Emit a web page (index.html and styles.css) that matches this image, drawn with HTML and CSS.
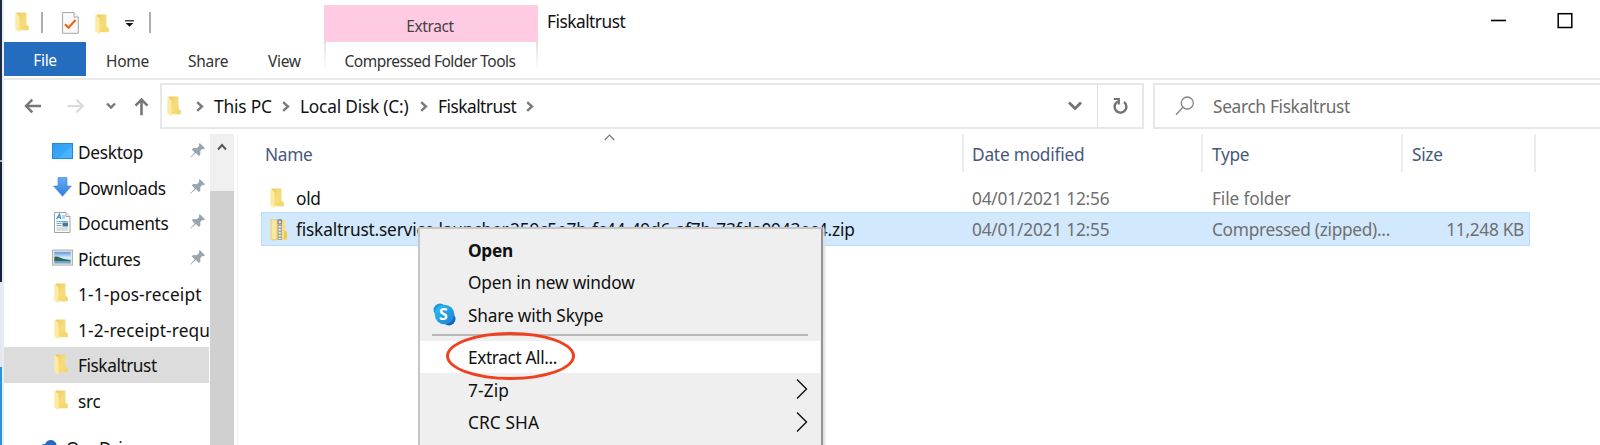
FILE: index.html
```html
<!DOCTYPE html>
<html lang="en">
<head>
<meta charset="utf-8">
<title>Fiskaltrust</title>
<link rel="stylesheet" href="styles.css">
</head>
<body>
<svg class="defs" width="0" height="0" aria-hidden="true">
  <defs>
    <linearGradient id="gold" x1="0" y1="0" x2="1" y2="1"><stop offset="0" stop-color="#e9cb62"/><stop offset=".5" stop-color="#f6dc7c"/><stop offset="1" stop-color="#f3d467"/></linearGradient>
    <linearGradient id="sky" x1="0" y1="0" x2="1" y2="1"><stop offset="0" stop-color="#2f9bf0"/><stop offset="1" stop-color="#41b1fd"/></linearGradient>
    <linearGradient id="arrow" x1="0" y1="0" x2="0" y2="1"><stop offset="0" stop-color="#66a9ef"/><stop offset="1" stop-color="#2f7fdf"/></linearGradient>
    <linearGradient id="skype" x1="0" y1="0" x2="1" y2="1"><stop offset="0" stop-color="#2fc0f3"/><stop offset="1" stop-color="#1a7fd4"/></linearGradient>
    <linearGradient id="photo" x1="0" y1="0" x2="0" y2="1"><stop offset="0" stop-color="#5b97dc"/><stop offset=".5" stop-color="#d4ebf8"/><stop offset="1" stop-color="#8fc3e4"/></linearGradient>
    <symbol id="folder" viewBox="0 0 14 21">
      <path d="M1.500 .5h10v12.300l2.300 1.500v4H3z" fill="url(#gold)"/>
      <path d="M.3.800 4.600 4.300V20.500L.3 17.500z" fill="#fdeaa3"/>
    </symbol>
    <symbol id="pin" viewBox="0 0 15 15">
      <path d="M9.700 0 15 5.200l-1.500 1-1.300-.2-2 2.200.2 3.600-1.500 1.300-3-3L.8 14.600 0 14.400l4.700-5L1.800 6.300 3.300 5l3.300.2 2.500-2.300V1z" fill="#9aa5af"/>
    </symbol>
    <symbol id="crumb" viewBox="0 0 8 11"><path d="M1.200 1.200 5.900 5.500 1.200 9.800" fill="none" stroke="#7b7b7b" stroke-width="2.500"/></symbol>
  </defs>
</svg>
<div class="screen">
  <div class="desktop-edge"><i class="edge-dark"></i><i class="edge-line"></i><i class="edge-dark2"></i><i class="edge-light"></i><i class="edge-blue"></i></div>
  <div class="window">
    <header class="ribbon">
      <div class="quick">
        <svg class="q-folder" width="14" height="21"><use href="#folder"/></svg>
        <i class="q-bar"></i>
        <svg class="q-doc" width="17" height="22" viewBox="0 0 17 22"><path d="M.6.600h11.400l4.300 4.500v16.200H.6z" fill="#fafafa" stroke="#a4a4a4"/><path d="M12 .6v4.500h4.300" fill="#fff" stroke="#a4a4a4"/><path d="M3 12.300l3.500 3.500L13.500 8" fill="none" stroke="#f26011" stroke-width="2.100"/></svg>
        <svg class="q-folder2" width="14" height="21"><use href="#folder"/></svg>
        <svg class="q-more" width="9" height="7" viewBox="0 0 9 7"><path d="M0 .8h9" stroke="#222" stroke-width="1.300"/><path d="M.6 3h7.800L4.500 6.800z" fill="#111"/></svg>
        <i class="q-bar"></i>
      </div>
      <nav class="tabs">
        <span class="tab tab-file">File</span>
        <span class="tab tab-home">Home</span>
        <span class="tab tab-share">Share</span>
        <span class="tab tab-view">View</span>
      </nav>
      <div class="context-head">Extract</div>
      <div class="context-tab">Compressed Folder Tools</div>
      <div class="title">Fiskaltrust</div>
      <div class="controls">
        <svg width="84" height="18" viewBox="0 0 84 18"><path d="M1 8.500h15" stroke="#000" stroke-width="1.600"/><rect x="68.200" y="1.700" width="13.600" height="13.800" fill="none" stroke="#000" stroke-width="1.500"/></svg>
      </div>
    </header>

    <div class="navbar">
      <div class="arrows">
        <svg width="132" height="20" viewBox="0 0 132 20" fill="none">
          <g stroke="#777" stroke-width="2.400"><path d="M17 10H2M8.300 3.700 2 10l6.300 6.300"/><path d="M83 7.500l4 4 4-4"/><path d="M117.500 19.300V3.500M111.500 9.700l6-6.200 6 6.200" stroke-width="2.600"/></g>
          <path d="M43.500 10h15M52.500 3.700 58.800 10l-6.300 6.300" stroke="#dadada" stroke-width="2.200"/>
        </svg>
      </div>
      <div class="address">
        <svg class="a-folder" width="14" height="21"><use href="#folder"/></svg>
        <svg width="8" height="11"><use href="#crumb"/></svg>
        <span class="crumb crumb-pc">This PC</span>
        <svg width="8" height="11"><use href="#crumb"/></svg>
        <span class="crumb crumb-disk">Local Disk (C:)</span>
        <svg width="8" height="11"><use href="#crumb"/></svg>
        <span class="crumb crumb-dir">Fiskaltrust</span>
        <svg width="8" height="11"><use href="#crumb"/></svg>
        <svg class="a-drop" width="14" height="10" viewBox="0 0 14 10"><path d="M1 1.500 7 7.500 13 1.500" fill="none" stroke="#737373" stroke-width="2.700"/></svg>
        <div class="refresh"><svg width="17" height="18" viewBox="0 0 17 18" fill="none" stroke="#737373"><path d="M5.800 4.500A5.900 5.900 0 1 0 12 5" stroke-width="2.500"/><path d="M1.800 2h5v5.500" stroke-width="2.200"/></svg></div>
      </div>
      <div class="search">
        <svg width="20" height="20" viewBox="0 0 20 20" fill="none" stroke="#858585" stroke-width="1.300"><circle cx="12.300" cy="7" r="6"/><path d="M8 11.300 1 18.700"/></svg>
        <span>Search Fiskaltrust</span>
      </div>
    </div>

    <div class="body">
      <aside class="tree">
        <div class="node"><svg class="ico" width="22" height="20" viewBox="0 0 22 20"><rect x=".5" y="1.500" width="20" height="15" fill="url(#sky)" stroke="#2587d8"/><path d="M7 16 20 4v12z" fill="#53bcff" opacity=".55"/></svg><span>Desktop</span><svg class="pin" width="15" height="15"><use href="#pin"/></svg></div>
        <div class="node"><svg class="ico" width="22" height="20" viewBox="0 0 22 20"><path d="M6 .5h9v8.500h4.300L10.600 19.300 1.500 9H6z" fill="url(#arrow)" stroke="#3e86dc" stroke-width=".6"/></svg><span>Downloads</span><svg class="pin" width="15" height="15"><use href="#pin"/></svg></div>
        <div class="node"><svg class="ico" width="22" height="21" viewBox="0 0 22 21"><path d="M2.500.500H14l4 4v16H2.500z" fill="#fcfcfc" stroke="#a3a3a3"/><path d="M14 .5v4h4" fill="#eee" stroke="#a3a3a3"/><path d="M4.500 7 7.600 2l1 5M5.500 5.300h2.700" stroke="#3090d8" stroke-width="1.200" fill="none"/><path d="M10 4h3M10 6h3M4.500 9.500H16M4.500 11.500h5M4.500 13.500h5" stroke="#6aaede"/><path d="M4.500 16H16M4.500 18H16" stroke="#bdbdbd"/><rect x="10.500" y="10.500" width="5.500" height="4" fill="#47799a"/></svg><span>Documents</span><svg class="pin" width="15" height="15"><use href="#pin"/></svg></div>
        <div class="node"><svg class="ico" width="22" height="18" viewBox="0 0 22 18"><rect x=".6" y="1.100" width="19.800" height="15" fill="#ebebeb" stroke="#aaa"/><rect x="2.300" y="2.800" width="16.400" height="11.600" fill="url(#photo)"/><path d="M2.300 8c3-1.500 6 1.200 9.500 2l6.900 1.200V12L2.300 12z" fill="#35684f"/><path d="M2.300 12h16.400v2.400H2.300z" fill="#6fa5cf"/></svg><span>Pictures</span><svg class="pin" width="15" height="15"><use href="#pin"/></svg></div>
        <div class="node"><svg class="ico dir" width="14" height="21"><use href="#folder"/></svg><span class="wide">1-1-pos-receipt</span></div>
        <div class="node"><svg class="ico dir" width="14" height="21"><use href="#folder"/></svg><span class="wide">1-2-receipt-requ</span></div>
        <div class="node current"><svg class="ico dir" width="14" height="21"><use href="#folder"/></svg><span class="tight">Fiskaltrust</span></div>
        <div class="node"><svg class="ico dir" width="14" height="21"><use href="#folder"/></svg><span>src</span></div>
        <div class="node drive"><svg width="20" height="14" viewBox="0 0 20 14"><path d="M1 14C-1 8 3 4.500 6 5.200 8-.5 16-.5 17.500 5.500 20 8 19 14 19 14z" fill="#2369c3"/><path d="M1 14c-1-5 2-8.500 5.500-8.500C10 6 13 9 19 14z" fill="#2f80d8"/></svg><span>OneDrive</span></div>
      </aside>
      <div class="scroll"><div class="scroll-up"><svg width="10" height="8" viewBox="0 0 10 8"><path d="M1 6.500 5 2l4 4.500" fill="none" stroke="#555" stroke-width="1.900"/></svg></div><div class="scroll-thumb"></div></div>
      <main class="list">
        <svg class="sort" width="11" height="7" viewBox="0 0 11 7"><path d="M.8 6 5.500 1.200 10.200 6" fill="none" stroke="#777" stroke-width="1.200"/></svg>
        <div class="cols head"><span class="h-name">Name</span><span class="h-date">Date modified</span><span>Type</span><span>Size</span></div>
        <div class="cols row"><span class="name"><svg width="14" height="21"><use href="#folder"/></svg><b>old</b></span><span class="date">04/01/2021 12:56</span><span class="kind">File folder</span><span></span></div>
        <div class="cols row selected"><span class="name"><svg width="18" height="22" viewBox="0 0 18 22"><path d="M1 .8h14v20H1z" fill="#f8df82"/><path d="M1 .8h6v20H1z" fill="#fbe89f" stroke="#e6c860" stroke-width=".8"/><path d="M14 11l3 2v7.500h-3z" fill="#efca4c"/><path d="M7.500 0h4.500v21H7.500z" fill="#a9a9a0"/><path d="M9.800 1v19" stroke="#eee" stroke-dasharray="1.500 1.500" stroke-width="2"/><circle cx="9.800" cy="3" r="2" fill="#ddd" stroke="#777"/></svg><b class="zip">fiskaltrust.service.launcher.259c5e7b-fc44-49d6-af7b-73fda0943ec4.zip</b></span><span class="date">04/01/2021 12:55</span><span>Compressed (zipped)...</span><span class="size">11,248 KB</span></div>
      </main>
    </div>
  </div>

  <div class="menu">
    <div class="item strong">Open</div>
    <div class="item spaced">Open in new window</div>
    <div class="item spaced"><svg class="skype" width="23" height="23" viewBox="0 0 23 23"><circle cx="7" cy="7" r="6.500" fill="#1c9be0"/><circle cx="16" cy="16" r="6.500" fill="#1763c0"/><circle cx="11.500" cy="11.500" r="9.800" fill="url(#skype)"/></svg><em>S</em>Share with Skype</div>
    <div class="rule"></div>
    <div class="item low hot">Extract All...</div>
    <div class="item low open">7-Zip<svg class="sub" width="12" height="22" viewBox="0 0 12 22"><path d="M1 1.500 10.500 11 1 20.500" fill="none" stroke="#111" stroke-width="1.400"/></svg></div>
    <div class="item low open">CRC SHA<svg class="sub" width="12" height="22" viewBox="0 0 12 22"><path d="M1 1.500 10.500 11 1 20.500" fill="none" stroke="#111" stroke-width="1.400"/></svg></div>
  </div>
  <div class="marker"></div>
</div>
</body>
</html>
```
FILE: styles.css
```css
* { box-sizing: border-box; }
body { margin: 0; background: #fff; font-family: "Noto Sans", "Open Sans", sans-serif; font-size: 17.3px; letter-spacing: -0.3px; color: #111; }
span, b, .item, .title, .context-tab { white-space: nowrap; }
svg { display: block; flex: none; }
.defs { position: absolute; }
.screen { position: relative; display: flex; width: 1600px; height: 445px; overflow: hidden; }

.desktop-edge { display: flex; flex: none; flex-direction: column; width: 4px; border-right: 2px solid #e9ecf0; }
.edge-dark { height: 160px; background: #1c2b45; }
.edge-line { height: 2px; background: #a9b2c2; }
.edge-dark2 { height: 120px; background: #14233b; }
.edge-light { height: 85px; background: #e4e8ee; }
.edge-blue { flex: 1; background: #2b95e0; }
.window { flex: 1; display: flex; flex-direction: column; min-width: 0; }

.ribbon { display: grid; grid-template: 42px 34px / 320px 214px 1fr 120px; height: 80px; border-bottom: 2px solid #e9e9e9; }
.quick { display: flex; align-items: center; padding: 2px 0 0 11px; }
.q-bar { width: 2px; height: 21px; background: #adadad; }
.q-folder { margin-right: 12px; }
.q-doc { margin: 2px 16px 0 19px; }
.q-folder2 { margin-top: 4px; margin-right: 16px; }
.q-more { margin-right: 15px; margin-top: 2px; }
.tabs { grid-row: 2; grid-column: 1; display: flex; font-size: 15.5px; color: #333; }
.tab { line-height: 38px; }
.tab-file { width: 82px; line-height: 36px; text-align: center; color: #fff; background: #246cbe; }
.tab-home { margin-left: 20px; width: 82px; }
.tab-share { width: 80px; }
.context-head { grid-row: 1; grid-column: 2; margin-top: 5px; padding-right: 2px; line-height: 43px; text-align: center; font-size: 15.5px; letter-spacing: -0.4px; color: #444; background: #fecbe3; }
.context-tab { grid-row: 2; grid-column: 2; height: 28px; line-height: 38px; text-align: center; font-size: 15.5px; letter-spacing: -0.53px; padding-right: 2px; color: #333; border: solid; border-width: 0 2px; border-image: linear-gradient(#e0e0e0, #fff) 1; }
.title { grid-row: 1; grid-column: 3; padding-left: 9px; line-height: 43px; letter-spacing: -0.5px; }
.controls { grid-row: 1; grid-column: 4; padding: 12px 0 0 10px; }

.navbar { display: flex; height: 49px; padding-top: 3px; }
.arrows { flex: none; width: 156px; padding: 13px 0 0 20px; }
.address { display: flex; flex: none; align-items: center; width: 984px; height: 46px; padding-left: 5px; border: 2px solid #e7e7e7; }
.a-folder { margin-right: 15px; }
.crumb-pc { width: 68px; margin-left: 10px; letter-spacing: -0.15px; }
.crumb-disk { width: 120px; margin-left: 10px; letter-spacing: -0.2px; }
.crumb-dir { width: 88px; margin-left: 10px; letter-spacing: -0.5px; }
.a-drop { margin-left: auto; margin-right: 15px; }
.refresh { display: flex; align-items: center; justify-content: center; width: 45px; align-self: stretch; border-left: 1px solid #e0e0e0; }
.search { display: flex; align-items: center; flex: none; width: 470px; height: 46px; margin-left: 9px; padding-left: 20px; border: 2px solid #e7e7e7; color: #6b6b6b; }
.search span { margin-left: 18px; letter-spacing: -0.33px; }

.body { display: flex; flex: 1; min-height: 0; }
.tree { width: 206px; padding-top: 5px; overflow: hidden; }
.node { display: flex; align-items: center; height: 35.5px; padding-left: 48px; }
.node span { margin-left: -1px; padding-top: 2px; }
.node .wide { letter-spacing: 0.12px; }
.node .tight { letter-spacing: -0.45px; }
.ico { margin-right: 5px; }
.ico.dir { margin-left: 2px; margin-right: 11px; }
.pin { margin: 0 5px 2px auto; }
.current { width: 205px; background: #dcdcdc; }
.drive { height: 54px; padding-left: 35px; }
.node.drive span { margin-left: 7px; margin-top: 4px; }
.drive svg { margin-top: 1px; }
.scroll { width: 24px; margin-top: 5px; background: #f0f0f0; }
.scroll-up { display: flex; justify-content: center; height: 57px; padding-top: 9px; }
.scroll-thumb { height: 260px; background: #d0d0d0; }
.list { position: relative; flex: 1; margin: 5px 0 0 3px; border-left: 1px solid #f1f1f1; }
.sort { position: absolute; left: 366px; top: 0; }
.cols { display: grid; grid-template-columns: 702px 239px 200px 133px; align-items: center; width: 1274px; }
.head { margin-left: 24px; height: 38px; color: #47597b; }
.head span { padding: 0 0 0 9px; height: 38px; line-height: 42px; border-right: 2px solid #ececec; }
.head .h-name { padding-left: 3px; }
.head .h-date { padding-left: 8px; letter-spacing: -0.22px; }
.row { margin-left: 23px; height: 33px; color: #6f6f6f; grid-template-columns: 703px 239px 200px 127px; width: 1269px; }
.row span { padding-left: 9px; }
.row .date { padding-left: 8px; letter-spacing: -0.2px; }
.row .kind { letter-spacing: -0.15px; }
.row:nth-of-type(2) { margin-top: 10px; }
.row b { font-weight: normal; color: #111; }
.row .zip { letter-spacing: -0.19px; }
.row .name { display: flex; align-items: center; padding-left: 9px; }
.name svg { width: 18px; margin-right: 8px; }
.name svg:has(use) { width: 14px; margin-right: 12px; }
.row.selected { height: 34px; padding-top: 1px; background: #d2e8fd; box-shadow: inset 0 0 0 1px #b8dcfb; margin-top: -3px; }
.row .size { text-align: right; padding: 0 6px 0 0; }

.menu { position: absolute; left: 418px; top: 227px; width: 405px; height: 240px; padding-top: 5px; background: #efefef; border: 2px solid #c6c6c6; border-right-color: #969696; box-shadow: 2px 1px 2px #ddd; }
.item { position: relative; display: flex; align-items: center; height: 32.5px; padding-left: 48px; }
.strong { font-weight: 700; }
.spaced { letter-spacing: -0.18px; }
.low { padding-top: 2px; letter-spacing: -0.38px; }
.open { letter-spacing: 0.1px; }
.rule { height: 2px; margin: 2px 13px 5px 12px; background: #b9b9b9; }
.hot { background: #fff; margin-right: 1px; }
.sub { margin-left: auto; margin-right: 13px; margin-bottom: 2px; }
.skype { position: absolute; left: 13px; top: 4px; }
.item em { position: absolute; left: 19px; top: 3px; color: #fff; font: 700 16px/24px "Noto Sans", sans-serif; }
.marker { position: absolute; left: 446px; top: 332px; width: 129px; height: 48px; border: 3px solid #f0401f; border-radius: 50%; }
```
